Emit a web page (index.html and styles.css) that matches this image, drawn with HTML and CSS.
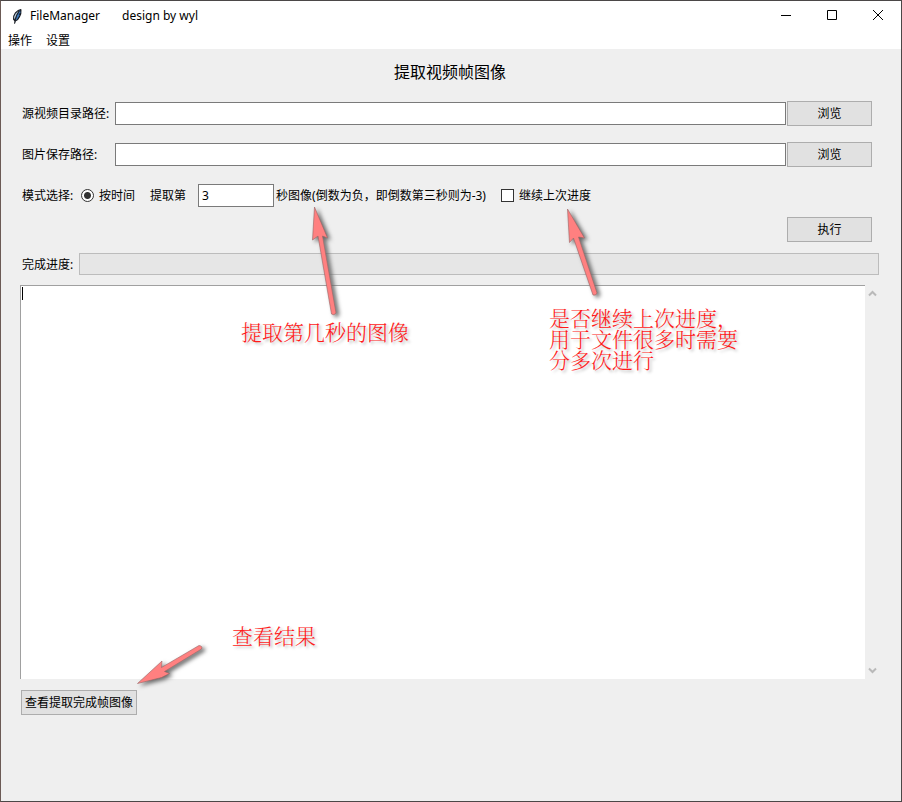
FILE: index.html
```html
<!DOCTYPE html>
<html lang="zh-CN">
<head>
<meta charset="utf-8">
<meta name="viewport" content="width=device-width, initial-scale=1">
<title>FileManager</title>
<link rel="stylesheet" href="styles.css">
</head>
<body>
<div class="window">
  <header class="titlebar">
    <svg class="feather" viewBox="0 0 10 17" width="10" height="17" aria-hidden="true">
      <path d="M8.7 1 9.5 1.500 9.300 6 8 9 6 12 3.500 13.500 3 16H2.300L2.500 13.200 1 11.500 1.200 8 3 4.500 6 2Z" fill="#171b22"/>
      <path d="M8 2 8.500 5 6.500 6 7.700 7 5 11.500 3.300 12.500 5 7Z" fill="#3b79bd"/>
      <path d="M6.700 2.600 3.500 5.800 2 9 2.600 11.600 4.500 6.500Z" fill="#b9cddd"/>
      <path d="M7.500 3 4.500 8 2.700 15" fill="none" stroke="#171b22" stroke-width="0.700"/>
    </svg>
    <span class="caption">FileManager</span>
    <span class="caption author">design by wyl</span>
    <div class="window-buttons">
      <button type="button" aria-label="最小化"><svg viewBox="0 0 12 12" width="12" height="12"><path d="M1 5.500h10"/></svg></button>
      <button type="button" aria-label="最大化"><svg viewBox="0 0 12 12" width="12" height="12"><path d="M1.500 .5h9v9h-9z"/></svg></button>
      <button type="button" aria-label="关闭"><svg viewBox="0 0 12 12" width="12" height="12"><path d="M1 0 11 10M11 0 1 10"/></svg></button>
    </div>
  </header>
  <nav class="menubar">
    <button type="button">操作</button>
    <button type="button">设置</button>
  </nav>
  <main class="content">
    <h1>提取视频帧图像</h1>
    <form class="form">
      <div class="row path-row">
        <label for="source">源视频目录路径:</label>
        <input type="text" id="source">
        <button type="button" class="btn">浏览</button>
      </div>
      <div class="row path-row">
        <label for="target">图片保存路径:</label>
        <input type="text" id="target">
        <button type="button" class="btn">浏览</button>
      </div>
      <div class="row mode-row">
        <span class="mode-label">模式选择:</span>
        <label class="choice"><input type="radio" name="mode" checked>按时间</label>
        <label class="prefix" for="second">提取第</label>
        <input type="text" id="second" value="3">
        <label class="suffix" for="second">秒图像(倒数为负，即倒数第三秒则为-3)</label>
        <label class="choice"><input type="checkbox">继续上次进度</label>
      </div>
    </form>
    <div class="run-row"><button type="button" class="btn">执行</button></div>
    <div class="progress-row">
      <span id="progress-label">完成进度:</span>
      <div class="progress" role="progressbar" aria-labelledby="progress-label" aria-valuenow="0"></div>
    </div>
    <div class="log">
      <textarea aria-label="日志"></textarea>
      <span class="caret"></span>
      <div class="scrollbar">
        <button type="button" aria-label="向上"><svg viewBox="0 0 9 7" width="9" height="7"><path d="M1 5.500 4.500 2 8 5.500"/></svg></button>
        <button type="button" aria-label="向下"><svg viewBox="0 0 9 7" width="9" height="7"><path d="M1 1.500 4.500 5 8 1.500"/></svg></button>
      </div>
    </div>
    <div class="footer"><button type="button" class="btn view">查看提取完成帧图像</button></div>
  </main>
  <svg class="arrow arrow-second" viewBox="0 0 40 120" width="40" height="120" aria-hidden="true">
    <path d="M9.500 6 22.500 37 17.500 35 31 112Q29 115 26.500 113L13 35 7.500 39Z"/>
  </svg>
  <p class="note note-second">提取第几秒的图像</p>
  <svg class="arrow arrow-resume" viewBox="0 0 50 100" width="50" height="100" aria-hidden="true">
    <path d="M7.500 8 24.500 37 18.500 36 37 92Q36 95 33 94L13.500 37 9.500 41.500Z"/>
  </svg>
  <p class="note note-resume">是否继续上次进度，<br>用于文件很多时需要<br>分多次进行</p>
  <svg class="arrow arrow-result" viewBox="0 0 80 50" width="80" height="50" aria-hidden="true">
    <path d="M7.500 42.500 32 20 31.500 26.500 69 4.500Q73 5 71.500 8L34.500 30.500 39.500 32.500 31.500 36.500Z"/>
  </svg>
  <p class="note note-result">查看结果</p>
</div>
</body>
</html>
```
FILE: styles.css
```css
* {
  box-sizing: border-box;
}

body {
  margin: 0;
  font: 12px/16px "Noto Sans", "Noto Sans CJK SC", sans-serif;
  color: #000;
}

button,
input,
textarea {
  font: inherit;
  color: inherit;
  margin: 0;
  border-radius: 0;
}

.window {
  position: relative;
  display: flex;
  flex-direction: column;
  min-height: 100vh;
  border: 1px solid #4b4747;
  border-left-color: #6b5a55;
  background: #efefef;
}

.titlebar {
  display: flex;
  align-items: center;
  height: 30px;
  padding-left: 11px;
  background: #fff;
}

.feather {
  margin-right: 8px;
}

.author {
  margin-left: 22px;
}

.window-buttons {
  display: flex;
  height: 100%;
  margin-left: auto;
}

.window-buttons button {
  display: grid;
  place-items: center;
  width: 46px;
  padding: 0;
  border: 0;
  background: none;
}

.window-buttons svg {
  fill: none;
  stroke: #000;
}

.menubar {
  display: flex;
  gap: 14px;
  height: 18px;
  padding: 1px 0 0 7px;
  background: #fff;
}

.menubar button {
  padding: 0;
  border: 0;
  background: none;
  line-height: 17px;
}

.content {
  flex: 1;
  display: flex;
  flex-direction: column;
  padding: 11px 21px 86px 19px;
}

h1 {
  margin: 0 0 17px;
  font-size: 16px;
  line-height: 24px;
  font-weight: 400;
  text-align: center;
}

.form {
  display: grid;
  gap: 16px;
  padding: 0 8px 0 2px;
}

.row {
  display: flex;
  align-items: center;
  height: 25px;
}

.path-row {
  display: grid;
  grid-template-columns: 92px 1fr 85px;
  column-gap: 1px;
}

.path-row label {
  white-space: nowrap;
}

input[type="text"] {
  min-width: 0;
  height: 23px;
  padding: 0 3px;
  border: 1px solid #7a7a7a;
  background: #fff;
}

.btn {
  width: 85px;
  height: 25px;
  padding: 0;
  border: 1px solid #adadad;
  background: #e1e1e1;
  white-space: nowrap;
}

.mode-row {
  white-space: nowrap;
}

.mode-label {
  width: 59px;
}

.choice {
  display: flex;
  align-items: center;
  gap: 5px;
}

.prefix {
  margin: 0 12px 0 15px;
}

.mode-row input[type="text"] {
  width: 76px;
}

.suffix {
  margin: 0 15px 0 2px;
}

input[type="radio"],
input[type="checkbox"] {
  appearance: none;
  width: 13px;
  height: 13px;
  border: 1px solid #333;
  background: #fff;
}

input[type="radio"] {
  border-radius: 50%;
  background: radial-gradient(circle, #333 3px, #fff 4px);
}

.run-row {
  margin-top: 9px;
  padding-right: 8px;
  text-align: right;
  height: 25px;
}

.progress-row {
  display: flex;
  align-items: flex-end;
  gap: 6px;
  margin: 11px 1px 10px 2px;
  line-height: 20px;
}

.progress {
  flex: 1;
  height: 22px;
  border: 1px solid #bcbcbc;
  background: #e6e6e6;
}

.log {
  position: relative;
  flex: 1;
  display: flex;
  min-height: 200px;
}

textarea {
  flex: 1;
  resize: none;
  padding: 1px;
  border: 0 solid #a0a0a0;
  border-width: 1px 0 0 1px;
  background: #fff;
  outline: 0;
}

.caret {
  position: absolute;
  left: 2px;
  top: 2px;
  width: 1px;
  height: 13px;
  background: #000;
}

.scrollbar {
  display: flex;
  flex-direction: column;
  justify-content: space-between;
  width: 15px;
}

.scrollbar button {
  display: grid;
  place-items: center;
  height: 17px;
  padding: 0;
  border: 0;
  background: none;
}

.scrollbar path {
  fill: none;
  stroke: #b9b9b9;
  stroke-width: 2;
}

.footer {
  margin: 11px 0 0 1px;
  height: 25px;
}

.view {
  width: 116px;
}

.note {
  position: absolute;
  margin: 0;
  font: 21px/21px "Noto Serif CJK SC", "Noto Sans CJK SC", serif;
  font-weight: 300;
  color: #ff1a1a;
  text-shadow: 2px 2px 3px #bbb;
  white-space: nowrap;
}

.note-second {
  left: 240px;
  top: 320px;
}

.note-resume {
  left: 548px;
  top: 306px;
}

.note-result {
  left: 231px;
  top: 624px;
}

.arrow {
  position: absolute;
  overflow: visible;
  fill: #ff8080;
  stroke: #9a6464;
  stroke-width: 0.600;
  filter: drop-shadow(3px 2px 2px #666);
}

.arrow-second {
  left: 304px;
  top: 200px;
}

.arrow-resume {
  left: 559px;
  top: 200px;
}

.arrow-result {
  left: 129px;
  top: 640px;
}
```
